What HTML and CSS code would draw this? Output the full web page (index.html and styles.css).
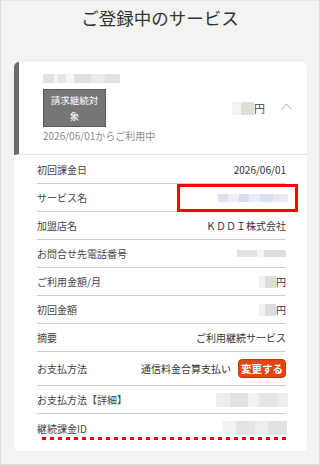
FILE: index.html
```html
<!DOCTYPE html>
<html lang="ja">
<head>
<meta charset="utf-8">
<meta name="viewport" content="width=device-width, initial-scale=1.0">
<title>ご登録中のサービス</title>
<link rel="stylesheet" href="styles.css">
</head>
<body>
<div class="page">
<h1 class="title">ご登録中のサービス</h1>

<div class="card">
  <div class="card-head">
    <div class="head-main">
      <span class="blur blur-name"></span>
      <div class="badge">請求継続対象</div>
      <div class="since">2026/06/01からご利用中</div>
    </div>
    <div class="head-side">
      <span class="blur blur-yen-head"></span><span class="yen">円</span>
      <svg class="chevron" width="11" height="7" viewBox="0 0 11 7"><path d="M0.5 6.5 L5.5 1 L10.5 6.5" fill="none" stroke="#a8a8a8" stroke-width="1"/></svg>
    </div>
  </div>

  <div class="rows">
    <div class="row">
      <span class="label">初回課金日</span>
      <span class="value">2026/06/01</span>
    </div>
    <div class="row row-mark">
      <span class="label">サービス名</span>
      <span class="blur blur-svc"></span>
      <span class="mark-box"></span>
    </div>
    <div class="row">
      <span class="label">加盟店名</span>
      <span class="value">ＫＤＤＩ株式会社</span>
    </div>
    <div class="row">
      <span class="label">お問合せ先電話番号</span>
      <span class="blur blur-tel"></span>
    </div>
    <div class="row">
      <span class="label">ご利用金額/月</span>
      <span class="value"><span class="blur blur-yen"></span>円</span>
    </div>
    <div class="row">
      <span class="label">初回金額</span>
      <span class="value"><span class="blur blur-yen"></span>円</span>
    </div>
    <div class="row">
      <span class="label">摘要</span>
      <span class="value">ご利用継続サービス</span>
    </div>
    <div class="row row-pay">
      <span class="label">お支払方法</span>
      <span class="value">通信料金合算支払い<a class="btn-change" href="#">変更する</a></span>
    </div>
    <div class="row">
      <span class="label">お支払方法【詳細】</span>
      <span class="blur blur-detail"></span>
    </div>
    <div class="row row-last">
      <span class="label">継続課金ID</span>
      <span class="blur blur-id"></span>
      <span class="mark-dots"></span>
    </div>
  </div>
</div>
</div>
</body>
</html>
```

FILE: styles.css
```css
body {
  margin: 0;
  background: #f3f3f1;
  font-family: "Noto Sans CJK JP", "Noto Sans", sans-serif;
  color: #333;
}
.page {
  height: 465px;
  box-sizing: border-box;
  border: 1px solid #dcdcdc;
  border-top-color: #e4e4e4;
}
.title {
  margin: 0;
  height: 61px;
  font-size: 17.5px;
  font-weight: 400;
  line-height: 34px;
  text-align: center;
  color: #333;
}

.card {
  margin: 0 12px 0 13px;
  background: #fff;
  border-radius: 5px;
  overflow: hidden;
  padding-bottom: 9px;
}
.card-head {
  height: 93px;
  box-sizing: border-box;
  display: flex;
  align-items: center;
  justify-content: space-between;
  border-left: 5px solid #6a6a6a;
  border-bottom: 1px solid #e0e0e0;
  padding: 0 15px 0 24px;
}
.head-main { display: flex; flex-direction: column; align-items: flex-start; }
.badge {
  width: 63px;
  box-sizing: border-box;
  margin-top: 6px;
  padding: 2px 5px;
  background: #767676;
  border: 1px solid #575757;
  color: #fff;
  font-size: 9.5px;
  line-height: 16px;
  text-align: center;
}
.since {
  margin-top: 1px;
  font-size: 10px;
  line-height: 15px;
  color: #8a8a8a;
}
.head-side { display: flex; align-items: center; }
.yen { font-size: 11px; color: #444; }
.chevron { margin-left: 16px; margin-top: -3px; }

.rows { padding: 1px 21px 0 23px; }
.row {
  position: relative;
  height: 28px;
  box-sizing: border-box;
  display: flex;
  align-items: center;
  justify-content: space-between;
  border-bottom: 1px solid #cfcfcf;
  font-size: 10px;
}
.row-pay { height: 34px; }
.row-last { border-bottom: none; }
.label { color: #444; }
.value { display: flex; align-items: center; color: #333; }

.btn-change {
  margin-left: 7px;
  width: 48px;
  height: 19px;
  box-sizing: border-box;
  display: flex;
  align-items: center;
  justify-content: center;
  background: #e2450f;
  border: 1px solid #c53a09;
  border-radius: 4px;
  color: #fff;
  font-size: 10.5px;
  font-weight: 700;
  text-decoration: none;
}

/* blurred (masked) values */
.blur { display: inline-block; filter: blur(0.7px); }
.blur-name {
  width: 77px;
  height: 9px;
  background: linear-gradient(90deg, #e2e2e2 0 14%, #f4f4f4 14% 20%, #e6e6e6 20% 30%, #f6f6f6 30% 40%, #e0e0e0 40% 62%, #ebebeb 62% 80%, #e3e3e3 80% 100%);
}
.blur-yen-head {
  width: 22px;
  height: 13px;
  background: linear-gradient(90deg, #f3f3f3 0 40%, #dedede 40% 100%);
}
.blur-svc {
  width: 70px;
  height: 8px;
  margin-right: -2px;
  background: linear-gradient(90deg, #dbe3f1 0 15%, #eef1f8 15% 30%, #d6dfee 30% 45%, #e8ecf5 45% 60%, #d9e1ef 60% 78%, #e6ebf4 78% 100%);
}
.blur-tel {
  width: 49px;
  height: 7px;
  background: linear-gradient(90deg, #e2e2e2 0 40%, #f4f4f4 40% 55%, #dedede 55% 100%);
}
.blur-yen {
  width: 17px;
  height: 12px;
  background: linear-gradient(90deg, #f2f2f2 0 35%, #dddddd 35% 100%);
}
.blur-detail {
  width: 72px;
  height: 14px;
  margin-right: -2px;
  background: linear-gradient(90deg, #eeeeee 0 20%, #e3e3e3 20% 45%, #f2f2f2 45% 60%, #e5e5e5 60% 85%, #ededed 85% 100%);
}
.blur-id {
  width: 64px;
  height: 14px;
  margin-right: -1px;
  background: linear-gradient(90deg, #f2f2f2 0 20%, #e4e4e4 20% 50%, #eeeeee 50% 70%, #e2e2e2 70% 100%);
}

/* red annotations */
.mark-box {
  position: absolute;
  left: 140px;
  right: -12px;
  top: 0;
  bottom: -1px;
  border: 3px solid #f00;
}
.mark-dots {
  position: absolute;
  left: 5px;
  right: 0;
  top: 23px;
  height: 3px;
  background: linear-gradient(90deg, #f00 0, #f00 4px, transparent 4px, transparent 8px);
  background-size: 8px 3px;
}
```
